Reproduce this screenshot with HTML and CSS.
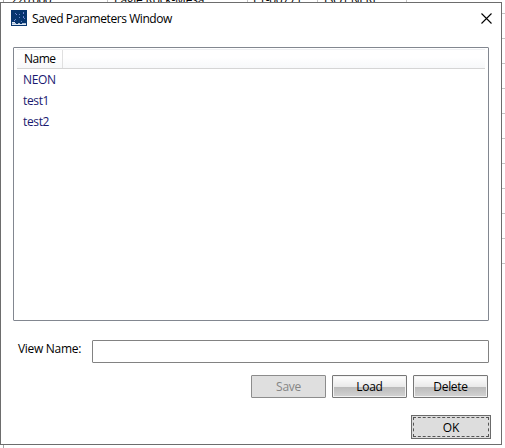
FILE: index.html
```html
<!DOCTYPE html>
<html lang="en">
<head>
<meta charset="utf-8">
<title>Saved Parameters Window</title>
<link rel="stylesheet" href="styles.css">
</head>
<body>
<div class="sheet">
  <div class="sheet-row">
    <span class="cell cell-id">220.000</span>
    <span class="cell cell-site">Eagle Rock-Mesa</span>
    <span class="cell cell-code">ET-00771</span>
    <span class="cell cell-lab">ISO1.NERL</span>
  </div>
</div>
<main class="dialog">
  <header class="titlebar">
    <svg class="app-icon" width="16" height="16" viewBox="0 0 16 16">
      <path fill="#07366f" d="M0 0h16v16H0z"/>
      <path fill="#6689c8" d="M4 3h1v1H4zM8 4h1v1H8zM12 2h1v1h-1zM4 9h1v1H4zM12 6h1v1h-1zM8 7h1v1H8zM13 8h1v1h-1zM10 11h1v1h-1z"/>
      <path fill="#8286dc" d="M5 4h1v1H5zM12 3h1v1h-1zM12 7h1v1h-1zM3 10h1v1H3z"/>
      <path fill="#dfe8f3" d="M1 12h3v1H1zM1 14h14v1H1z"/>
      <path fill="#a9bdd6" d="M1 13h4v1H1zM7 13h2v1H7zM11 13h4v1h-4z"/>
    </svg>
    <h1 class="title">Saved Parameters Window</h1>
    <svg class="close" width="11" height="11" viewBox="0 0 11 11"><path d="M.5.5l10 10M10.5.5l-10 10" stroke="#000" stroke-width="1.1" fill="none"/></svg>
  </header>
  <section class="list">
    <div class="list-head"><span class="list-col">Name</span></div>
    <div class="item">NEON</div>
    <div class="item">test1</div>
    <div class="item">test2</div>
  </section>
  <div class="field">
    <label class="label" for="view">View Name:</label>
    <input class="input" id="view" type="text">
  </div>
  <div class="actions">
    <button class="btn save" disabled>Save</button>
    <button class="btn load">Load</button>
    <button class="btn delete">Delete</button>
  </div>
  <div class="footer"><button class="ok"><span class="focus">OK</span></button></div>
</main>
</body>
</html>
```
FILE: styles.css
```css
* { box-sizing: border-box; }
body {
  margin: 0;
  height: 448px;
  padding-top: 2px;
  overflow: hidden;
  background: #fff;
  font: 12px/16px "Open Sans", "Noto Sans", sans-serif;
  color: #000;
}
.sheet {
  position: absolute;
  inset: 0;
  overflow: hidden;
  background: linear-gradient(#a8a8a8, #a8a8a8) 3px 0 / 1px 100% no-repeat;
}
.sheet::after {
  content: "";
  position: absolute;
  top: 13px;
  right: 0;
  width: 4px;
  height: 251px;
  background: repeating-linear-gradient(#c4c4c4 0 1px, #fff 1px 25px);
}
.sheet-row { display: flex; height: 13px; margin-left: 4px; }
.cell {
  height: 13px;
  padding-left: 6px;
  border-right: 1px solid #c4c4c4;
  line-height: 16px;
  margin-top: -8px;
  white-space: nowrap;
}
.cell-id { width: 104px; padding-left: 7px; letter-spacing: -.6px; }
.cell-site { width: 140px; letter-spacing: -.2px; }
.cell-code { width: 70px; padding-left: 5px; letter-spacing: -.3px; }
.cell-lab { width: 89px; letter-spacing: -.5px; }
.dialog {
  position: relative;
  width: 502px;
  height: 443px;
  border: 1px solid #6d6d6d;
  background: #fff;
}
.titlebar { display: flex; align-items: center; height: 31px; padding: 0 9px 0 10px; }
.app-icon { margin-top: -1px; }
.title { margin: 1px auto 0 5px; font: inherit; letter-spacing: -.43px; }
.close { margin-top: -1px; }
.list {
  width: 476px;
  height: 274px;
  margin: 13px 0 0 12px;
  border: 1px solid #828790;
  border-radius: 1px;
  padding: 1px 3px;
}
.list-head {
  display: flex;
  height: 20px;
  border-top: 1px solid #eff0f3;
  border-bottom: 1px solid #d5d5d5;
  background: linear-gradient(#fff 0 40%, #f7f8fa);
}
.list-col { width: 46px; padding-left: 7px; line-height: 18px; letter-spacing: -.5px; border-right: 1px solid #e0e0e0; }
.item { height: 21px; padding-left: 6px; line-height: 21px; letter-spacing: -.35px; color: #191970; }
.field { display: flex; margin: 19px 0 0 17px; }
.label { width: 74px; line-height: 18px; letter-spacing: -.3px; }
.input { width: 397px; height: 23px; padding: 2px; border: 1px solid #828282; border-radius: 1px; background: #fff; font: inherit; }
.actions { display: flex; justify-content: flex-end; gap: 6px; margin: 12px 13px 0 0; }
.btn {
  width: 75px;
  height: 23px;
  padding: 0;
  border: 1px solid #777;
  border-radius: 1px;
  box-shadow: inset 0 0 0 1px #f2f2f2;
  background: linear-gradient(#fff 0, #eaeaea 50%, #b9b9b9 50%, #d4d4d4 100%);
  font: inherit;
  letter-spacing: -.3px;
  color: #000;
}
.save { border-color: #8c8c8c; background: #dfdfdf; box-shadow: none; color: #858585; }
.footer { display: flex; justify-content: flex-end; margin: 17px 10px 0 0; }
.ok { width: 80px; height: 24px; padding: 1px; border: 1px solid #6b6b6b; background: #ddd; font: inherit; color: #000; }
.focus { display: block; height: 20px; border: 1px dashed #555; line-height: 20px; }
```
